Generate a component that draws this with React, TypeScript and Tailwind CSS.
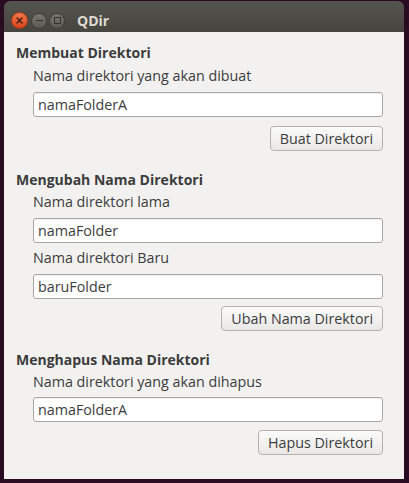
import React from "react";

const font = { fontFamily: '"Open Sans", "Noto Sans", sans-serif' };

function Input({ value }: { value: string }) {
  return (
    <div className="ml-[29px] mr-[21px] h-[25px] rounded-[3px] border border-[#a8a7a3] bg-white flex items-center pl-[4px] text-[14.3px] text-[#3c3c3c] shadow-[inset_0_1px_1px_rgba(0,0,0,0.06)]">
      {value}
    </div>
  );
}

function Btn({ label }: { label: string }) {
  return (
    <div className="flex justify-end mr-[21px]">
      <div className="h-[25px] px-[9px] rounded-[4px] border border-[#b3b2ae] bg-gradient-to-b from-[#fbfbfa] to-[#e9e8e6] flex items-center text-[14.3px] text-[#3c3c3c]">
        {label}
      </div>
    </div>
  );
}

function Heading({ text, mt }: { text: string; mt: string }) {
  return (
    <div className={`${mt} ml-[12px] h-[18px] leading-[18px] text-[14px] font-bold text-[#3c3c3c]`}>{text}</div>
  );
}

function Label({ text, mt }: { text: string; mt: string }) {
  return <div className={`${mt} ml-[29px] h-[18px] leading-[18px] text-[14.3px] text-[#3c3c3c]`}>{text}</div>;
}

export default function App() {
  return (
    <div className="w-[409px] h-[483px] bg-[#2a0c22] pt-[1px] pl-[4px] pr-[5px] pb-[4px] flex flex-col" style={font}>
      <div className="h-[31px] rounded-t-[6px] bg-gradient-to-b from-[#55544f] to-[#46453f] flex items-start pt-[11px] pl-[7px]">
        <div className="w-[17px] h-[17px] rounded-full bg-gradient-to-b from-[#f2764c] to-[#d9431c] border border-[#a8391a] flex items-center justify-center">
          <svg width="7" height="7" viewBox="0 0 7 7">
            <path d="M1 1L6 6M6 1L1 6" stroke="#3a1b10" strokeWidth="1.4" strokeLinecap="round" />
          </svg>
        </div>
        <div className="ml-[3px] mt-[0.5px] w-[16px] h-[16px] rounded-full bg-gradient-to-b from-[#77766f] to-[#5b5a54] border border-[#3e3d39] flex items-center justify-center">
          <div className="w-[7px] h-[1.5px] bg-[#34332f]" />
        </div>
        <div className="ml-[2px] mt-[0.5px] w-[16px] h-[16px] rounded-full bg-gradient-to-b from-[#77766f] to-[#5b5a54] border border-[#3e3d39] flex items-center justify-center">
          <div className="w-[7px] h-[7px] border border-[#34332f]" />
        </div>
        <div className="ml-[12px] mt-[1px] text-[14px] font-bold leading-[16px] text-[#dfdbd2]">QDir</div>
      </div>
      <div className="flex-1 bg-[#f2f1f0] flex flex-col pt-[12px]">
        <Heading text="Membuat Direktori" mt="mt-0" />
        <Label text="Nama direktori yang akan dibuat" mt="mt-[5px]" />
        <div className="mt-[7px]"><Input value="namaFolderA" /></div>
        <div className="mt-[9px]"><Btn label="Buat Direktori" /></div>

        <Heading text="Mengubah Nama Direktori" mt="mt-[20px]" />
        <Label text="Nama direktori lama" mt="mt-[4px]" />
        <div className="mt-[7px]"><Input value="namaFolder" /></div>
        <Label text="Nama direktori Baru" mt="mt-[6px]" />
        <div className="mt-[7px]"><Input value="baruFolder" /></div>
        <div className="mt-[7px]"><Btn label="Ubah Nama Direktori" /></div>

        <Heading text="Menghapus Nama Direktori" mt="mt-[20px]" />
        <Label text="Nama direktori yang akan dihapus" mt="mt-[4px]" />
        <div className="mt-[6px]"><Input value="namaFolderA" /></div>
        <div className="mt-[8px]"><Btn label="Hapus Direktori" /></div>
      </div>
    </div>
  );
}
